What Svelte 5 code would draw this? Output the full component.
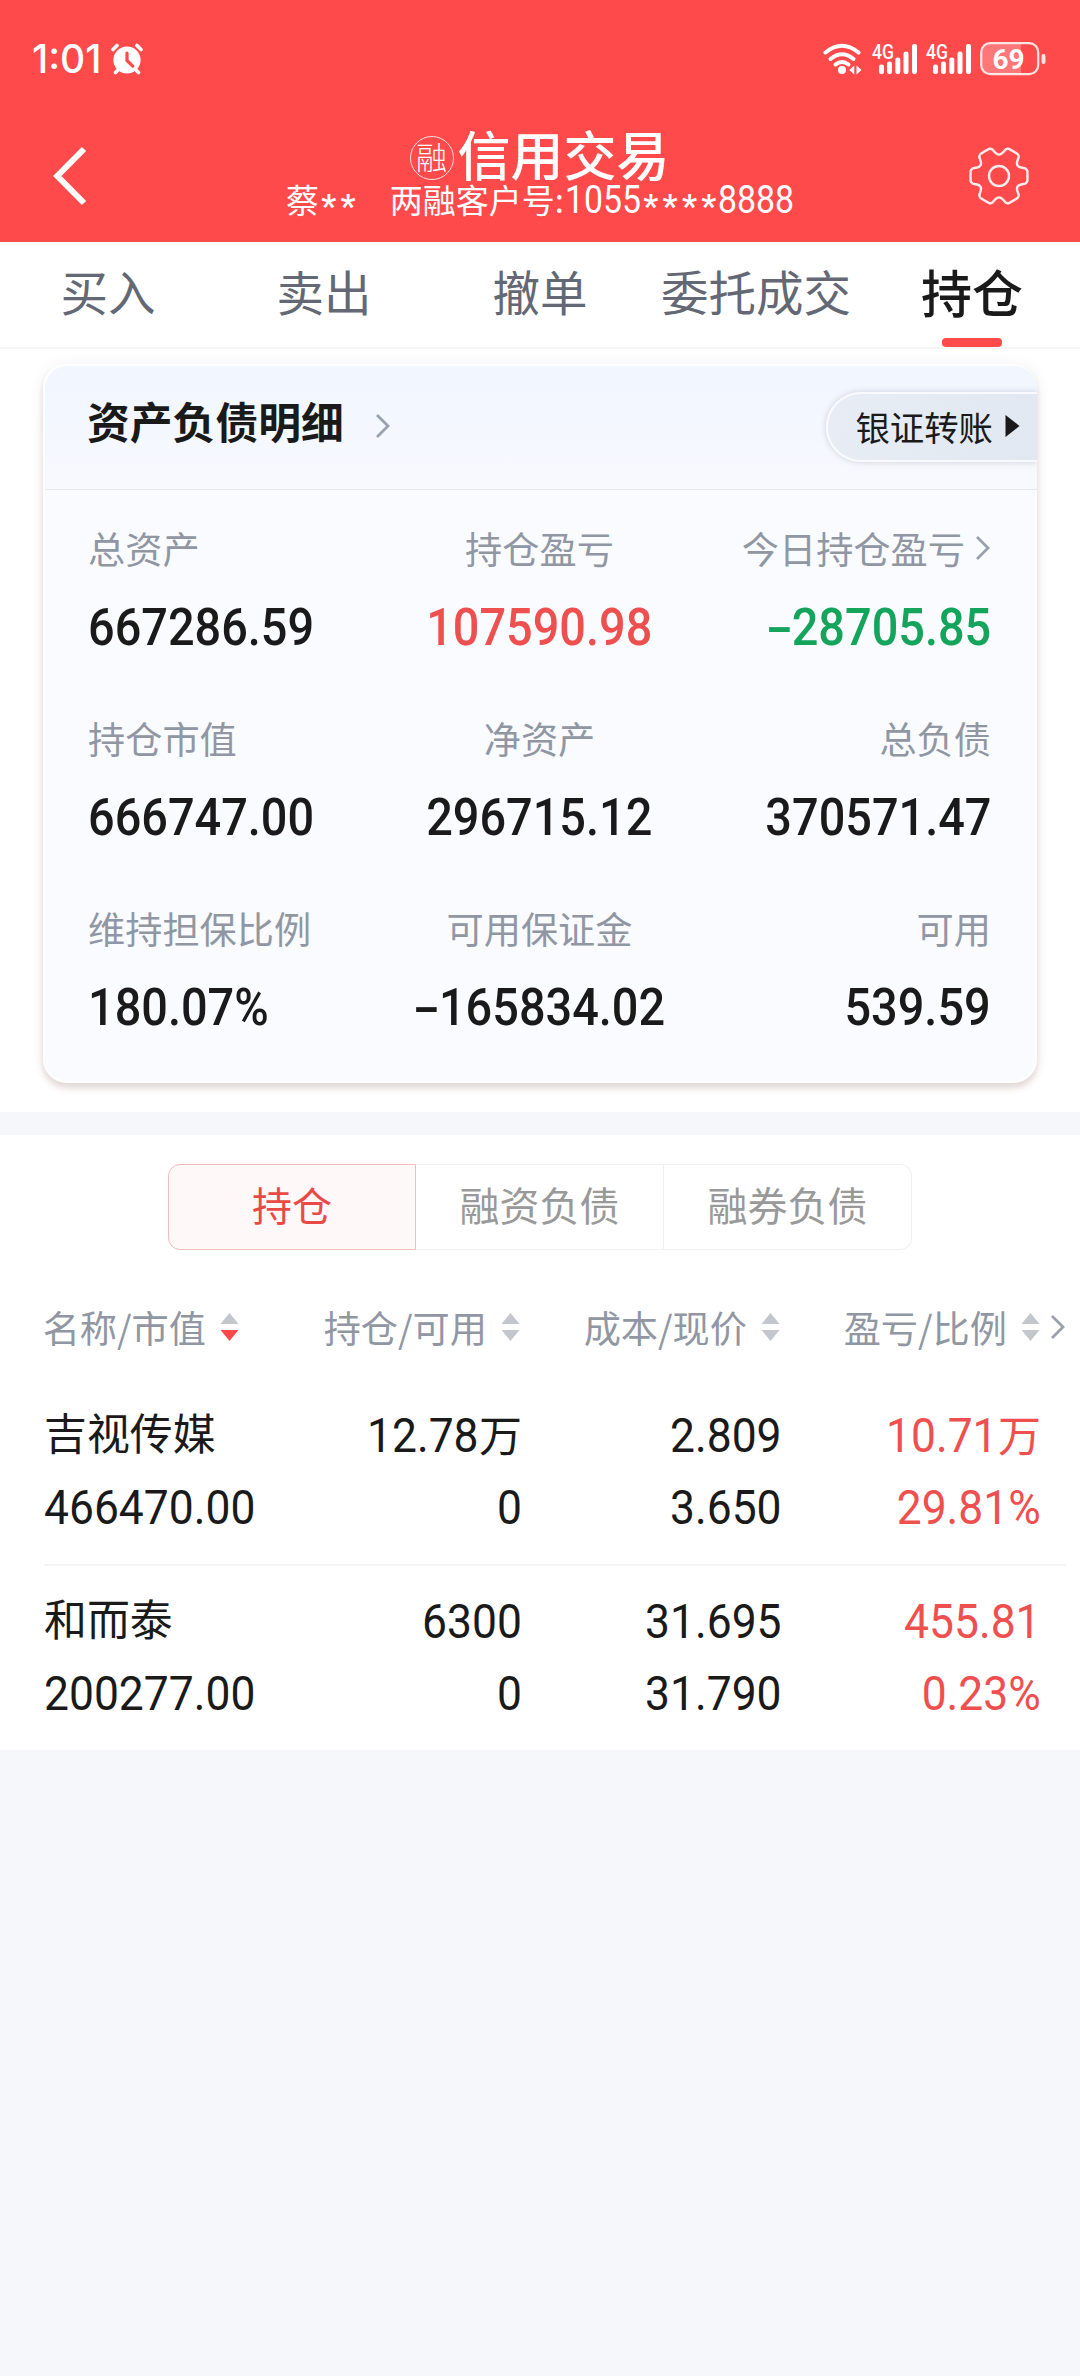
<script lang="ts">
    const tabs = ['买入', '卖出', '撤单', '委托成交', '持仓']
    const segments = ['持仓', '融资负债', '融券负债']
    let activeTab = $state(4)
    let activeSegment = $state(0)

    const stats = [
        { label: '总资产', value: '667286.59' },
        { label: '持仓盈亏', value: '107590.98', tone: 'up' },
        { label: '今日持仓盈亏', value: '-28705.85', tone: 'down', link: true },
        { label: '持仓市值', value: '666747.00' },
        { label: '净资产', value: '296715.12' },
        { label: '总负债', value: '370571.47' },
        { label: '维持担保比例', value: '180.07%' },
        { label: '可用保证金', value: '-165834.02' },
        { label: '可用', value: '539.59' },
    ]

    const columns = ['名称/市值', '持仓/可用', '成本/现价', '盈亏/比例']

    const holdings = [
        {
            name: '吉视传媒',
            worth: '466470.00',
            cells: [
                ['12.78万', '0'],
                ['2.809', '3.650'],
                ['10.71万', '29.81%'],
            ],
        },
        {
            name: '和而泰',
            worth: '200277.00',
            cells: [
                ['6300', '0'],
                ['31.695', '31.790'],
                ['455.81', '0.23%'],
            ],
        },
    ]

    // outline of the six-toothed settings gear, centred on 0,0
    const gearPath = () => {
        const at = (deg: number, r: number) => {
            const a = (deg * Math.PI) / 180
            return `${(r * Math.cos(a)).toFixed(2)} ${(r * Math.sin(a)).toFixed(2)}`
        }
        let d = ''
        for (let i = 0; i < 6; i++) {
            const a = i * 60
            d += `${i ? 'L' : 'M'}${at(a - 16, 27.4)}Q${at(a - 13, 28.8)} ${at(a - 10, 28.8)}`
            d += `Q${at(a, 28.6)} ${at(a + 10, 28.8)}Q${at(a + 13, 28.8)} ${at(a + 16, 27.4)}`
            d += `L${at(a + 21, 23.6)}Q${at(a + 30, 19.4)} ${at(a + 39, 23.6)}`
        }
        return d + 'Z'
    }
</script>

{#snippet chevron()}
    <svg class="chevron" width="16" height="26" viewBox="0 0 16 26">
        <path d="M2 2l11 11L2 24" />
    </svg>
{/snippet}

{#snippet amount(text: string)}
    {@const unit = text.endsWith('万')}
    {@const minus = text.startsWith('-')}
    <span class="amount"
        ><span class="num"
            >{#if minus}<span class="minus">-</span>{/if}{text.replace(/^-|万$/g, '')}</span
        >{#if unit}<span class="unit">万</span>{/if}</span
    >
{/snippet}

{#snippet signal()}
    <svg class="signal" width="48" height="32" viewBox="0 0 48 32">
        <text x="0" y="16" textLength="22" lengthAdjust="spacingAndGlyphs">4G</text>
        <rect x="7" y="21.5" width="5" height="9.5" rx="2.2" />
        <rect x="15" y="18.5" width="5" height="12.5" rx="2.2" />
        <rect x="23.3" y="14.5" width="5" height="16.5" rx="2.2" />
        <rect x="31.5" y="8.5" width="5" height="22.5" rx="2.2" />
        <rect x="40" y="1" width="5" height="30" rx="2.2" />
    </svg>
{/snippet}

<div class="page">
    <header>
        <div class="status">
            <span class="time">1:01</span>
            <svg class="alarm" width="32" height="32" viewBox="0 0 32 32">
                <circle cx="16" cy="17" r="13.6" fill="#fff" />
                <path d="M2 6.500l4-4M30 6.500l-4-4M7 27l-2.500 2.500M25 27l2.500 2.500" stroke="#fff" stroke-width="3.600" stroke-linecap="round" />
                <path d="M16 10v7.500l5.800 5.600" fill="none" stroke="#ff4a4b" stroke-width="3.200" stroke-linecap="round" stroke-linejoin="round" />
            </svg>
            <div class="icons">
                <svg class="wifi" width="40" height="32" viewBox="0 0 40 32">
                    <g fill="none" stroke="#fff" stroke-width="4" stroke-linecap="round">
                        <path d="M2.500 9.500Q19 -4 35.500 9.500" />
                        <path d="M7.500 16Q19 6.500 30.500 16" />
                        <path d="M12.500 21.500Q19 16.500 25.500 21.500" />
                    </g>
                    <circle cx="19" cy="27" r="4" fill="#fff" />
                    <path d="M26.300 27l5-4.500v9zM38.500 27l-5-4.500v9z" fill="#fff" />
                </svg>
                {@render signal()}
                {@render signal()}
                <svg class="battery" width="67" height="34" viewBox="0 0 67 34">
                    <path d="M41 2H10a9 9 0 0 0-9 9v12a9 9 0 0 0 9 9h31z" fill="#fff" opacity=".25" />
                    <rect x="1.200" y="1.200" width="57" height="31" rx="9" fill="none" stroke="#fff" stroke-opacity=".85" stroke-width="2.200" />
                    <rect x="61.500" y="12" width="4" height="10" rx="2" fill="#fff" opacity=".85" />
                    <text x="28.500" y="26.800" text-anchor="middle">69</text>
                </svg>
            </div>
        </div>
        <nav>
            <svg class="back" width="40" height="64" viewBox="0 0 40 64">
                <path d="M34 5L7.300 32L34 59" fill="none" stroke="#fff" stroke-width="6" />
            </svg>
            <div class="heading">
                <h1><span class="badge">融</span>信用交易</h1>
                <p>
                    <span>蔡</span><span class="stars"><i>*</i><i>*</i></span>
                    <span class="client">两融客户号</span><span class="colon">:</span><span class="digits">1055</span><span
                        class="stars"><i>*</i><i>*</i><i>*</i><i>*</i></span
                    ><span class="digits">8888</span>
                </p>
            </div>
            <svg class="gear" width="64" height="64" viewBox="-32 -32 64 64">
                <path d={gearPath()} />
                <circle r="10" />
            </svg>
        </nav>
    </header>

    <div class="tabs">
        {#each tabs as tab, i}
            <button class:active={activeTab === i} onclick={() => (activeTab = i)}>{tab}</button>
        {/each}
    </div>

    <section class="overview">
        <div class="card">
            <div class="card-head">
                <h2>资产负债明细</h2>
                {@render chevron()}
                <button class="transfer">
                    银证转账
                    <svg width="15" height="22" viewBox="0 0 15 22"><path d="M.500 0v22L14.500 11z" fill="#1a1a1a" /></svg>
                </button>
            </div>
            <div class="stats">
                {#each stats as stat}
                    <div class="stat">
                        <div class="label">
                            {stat.label}{#if stat.link}{@render chevron()}{/if}
                        </div>
                        <div class="value {stat.tone ?? ''}">{@render amount(stat.value)}</div>
                    </div>
                {/each}
            </div>
        </div>
    </section>

    <section class="positions">
        <div class="segments">
            {#each segments as segment, i}
                <button class:active={activeSegment === i} onclick={() => (activeSegment = i)}>{segment}</button>
            {/each}
        </div>

        <div class="row head">
            {#each columns as column, i}
                <div class="th">
                    {column}
                    <svg width="19" height="28" viewBox="0 0 19 28">
                        <path d="M9.500 0l9 11h-18z" fill="#c3c6cd" />
                        <path d="M9.500 28l9-11h-18z" fill={i === 0 ? '#ff4a4b' : '#c3c6cd'} />
                    </svg>
                </div>
            {/each}
            {@render chevron()}
        </div>

        <div class="list">
            {#each holdings as item}
                <div class="row item">
                    <div class="cell">
                        <div class="name">{item.name}</div>
                        <div class="line">{@render amount(item.worth)}</div>
                    </div>
                    {#each item.cells as lines, i}
                        <div class="cell" class:up={i === 2}>
                            {#each lines as line}
                                <div class="line">{@render amount(line)}</div>
                            {/each}
                        </div>
                    {/each}
                </div>
            {/each}
        </div>
    </section>
</div>

<style>
    :global(body) {
        margin: 0;
        background: #f6f7fa;
    }

    .page {
        width: 1080px;
        min-height: 2376px;
        background: #f6f7fa;
        color: #1a1a1a;
        font-family: 'Noto Sans CJK SC', sans-serif;
    }

    h1,
    h2,
    p {
        margin: 0;
    }

    button {
        padding: 0;
        border: 0;
        background: none;
        font: inherit;
        color: inherit;
    }

    svg {
        display: block;
        flex: none;
    }

    header {
        box-sizing: border-box;
        height: 242px;
        padding-top: 42px;
        background: #ff4a4b;
        color: #fff;
    }

    .status {
        display: flex;
        align-items: center;
        height: 34px;
        margin-bottom: 34px;
        padding: 0 33px 0 32px;
    }

    .time {
        width: 79px;
        font: 500 39px/36px Inter, sans-serif;
    }

    .icons {
        display: flex;
        align-items: center;
        gap: 6px;
        margin-left: auto;

        .signal {
            overflow: visible;
            fill: #fff;
        }

        text {
            fill: #fff;
            font: 500 20px Roboto, sans-serif;
        }

        .wifi {
            margin-right: 3px;
        }

        .battery text {
            font: 700 28px Roboto, sans-serif;
        }
    }

    nav {
        display: grid;
        grid-template-columns: 1fr 560px 1fr;
        align-items: center;
        height: 132px;
        padding: 0 49px 0 50px;
    }

    h1 {
        display: flex;
        align-items: center;
        justify-content: center;
        height: 46px;
        margin-right: 2px;
        font-size: 53px;
        font-weight: 500;
        line-height: 46px;
    }

    .badge {
        box-sizing: border-box;
        width: 44px;
        height: 44px;
        margin: 9px 4px 0 0;
        border: 1.5px solid rgb(255 255 255 / 80%);
        border-radius: 50%;
        font-size: 31px;
        font-weight: 300;
        line-height: 38px;
        text-align: center;
    }

    p {
        display: flex;
        justify-content: center;
        height: 46px;
        font-size: 33px;
        line-height: 46px;
    }

    .stars {
        display: flex;

        i {
            width: 19.3px;
            font: 500 34px/60px Roboto, sans-serif;
            text-align: center;
        }
    }

    .client {
        margin-left: 32px;
    }

    .colon {
        width: 10px;
    }

    .digits {
        width: 76.5px;
        font: 400 38px/49px Roboto, sans-serif;
        transform: scaleX(0.89);
        transform-origin: left;
    }

    .gear {
        justify-self: end;
        fill: none;
        stroke: #fff;
        stroke-width: 2.4;
        stroke-opacity: 0.9;
    }

    .tabs {
        display: grid;
        grid-template-columns: repeat(5, 1fr);
        height: 105px;
        border-bottom: 2px solid #f5f6f8;
        background: #fff;

        button {
            display: flex;
            flex-direction: column;
            align-items: center;
            padding-top: 14px;
            font-size: 47.5px;
            line-height: 70px;
            color: #636874;
        }

        .active {
            font-size: 51px;
            font-weight: 500;
            color: #1a1a1a;

            &::after {
                content: '';
                width: 60px;
                height: 9px;
                margin-top: 12px;
                border-radius: 4px;
                background: #ff4a4b;
            }
        }
    }

    .overview {
        padding: 15px 43px 29px;
        background: #fff;
    }

    .card {
        box-sizing: border-box;
        height: 719px;
        border: 2px solid #fff;
        border-radius: 24px;
        background: #fafbff;
        box-shadow:
            0 5px 6px rgb(110 50 50 / 16%),
            0 1px 14px rgb(110 60 60 / 8%);
    }

    .card-head {
        display: flex;
        align-items: center;
        height: 123px;
        margin-right: -2px;
        padding-left: 42px;
        border-bottom: 1px solid #e6e9ee;
        border-radius: 22px 22px 0 0;
        background: linear-gradient(#f1f6ff, #f7f9fe);

        .chevron {
            margin-bottom: 4px;
        }
    }

    h2 {
        margin: -16px 31px 0 0;
        font-size: 42.8px;
        font-weight: 700;
        line-height: 60px;
    }

    .chevron {
        fill: none;
        stroke: #9aa1ae;
        stroke-width: 2.8;
    }

    .transfer {
        display: flex;
        align-items: center;
        gap: 12px;
        box-sizing: border-box;
        height: 70px;
        margin: 0 0 2px auto;
        padding: 0 17px 2px 27px;
        border: 2px solid #f8fafd;
        border-right: 0;
        border-radius: 35px 0 0 35px;
        background: linear-gradient(100deg, #e8edf5, #e1e8f1);
        box-shadow: 0 0 6px rgb(60 70 90 / 22%);
        font-size: 34.4px;
        line-height: 62px;
        clip-path: inset(-12px 0 -12px -12px);
    }

    .stats {
        display: grid;
        grid-template-columns: repeat(3, 1fr);
        row-gap: 54px;
        padding: 34px 44px 0 43px;
    }

    .stat {
        display: flex;
        flex-direction: column;
        align-items: flex-start;

        &:nth-child(3n + 2) {
            align-items: center;

            .num {
                transform-origin: center;
            }
        }

        &:nth-child(3n) {
            align-items: flex-end;

            .num {
                transform-origin: right;
            }
        }
    }

    .label {
        display: flex;
        align-items: center;
        gap: 10px;
        font-size: 37.2px;
        line-height: 48px;
        color: #9097a3;
    }

    .value {
        height: 64px;
        margin-top: 24px;
        line-height: 64px;

        .num {
            font-size: 51.5px;
            font-weight: 500;
            transform: scaleX(0.91);
        }
    }

    .amount {
        display: inline-flex;
        align-items: baseline;
    }

    .num {
        font-family: Roboto, sans-serif;
        font-size: 48px;
        transform: scaleX(0.925);
        transform-origin: left;
    }

    .minus {
        display: inline-block;
        width: 27px;
        text-align: center;
        transform: scaleX(1.7);
    }

    .unit {
        font-size: 43px;
        line-height: 60px;
    }

    .up {
        color: #ee4f4f;
    }

    .down {
        color: #14a45c;
    }

    .positions {
        box-sizing: border-box;
        height: 638px;
        border-top: 23px solid #f6f7fa;
        background: #fff;
    }

    .segments {
        display: flex;
        width: 744px;
        height: 86px;
        margin: 0 auto;
        padding-top: 29px;

        button {
            box-sizing: border-box;
            width: 248px;
            height: 86px;
            padding-bottom: 7px;
            border: 1.5px solid #f0f0f3;
            font-size: 40px;
            color: #999;

            & + button {
                border-left: 0;
            }

            &:first-child {
                border-radius: 12px 0 0 12px;
            }

            &:last-child {
                border-radius: 0 12px 12px 0;
            }
        }

        .active {
            border-color: #f2bcbc;
            background: #fff8f8;
            color: #ea4a47;
        }
    }

    .row {
        display: grid;
        grid-template-columns: 197px 279px 260px 259px;
        margin-left: 44px;
    }

    .head {
        box-sizing: border-box;
        grid-template-columns: 195px 281px 260px 260px auto;
        align-items: center;
        justify-content: start;
        height: 130px;
        padding-top: 24px;

        .chevron {
            margin-left: 10px;
        }
    }

    .th {
        display: flex;
        align-items: center;
        justify-content: flex-end;
        gap: 14px;
        font-size: 37.2px;
        line-height: 48px;
        color: #9097a3;
        white-space: nowrap;
    }

    .item {
        box-sizing: border-box;
        height: 186px;
        margin-right: 14px;
        padding-top: 20px;
        border-bottom: 2px solid #f4f5f7;

        &:last-child {
            border-bottom: 0;
        }
    }

    .name {
        height: 72px;
        font-size: 42.9px;
        line-height: 63px;
        white-space: nowrap;
    }

    .line {
        height: 72px;
        line-height: 72px;
    }

    .cell + .cell {
        margin-right: -2px;
        text-align: right;

        .num {
            transform-origin: right;
        }
    }
</style>
